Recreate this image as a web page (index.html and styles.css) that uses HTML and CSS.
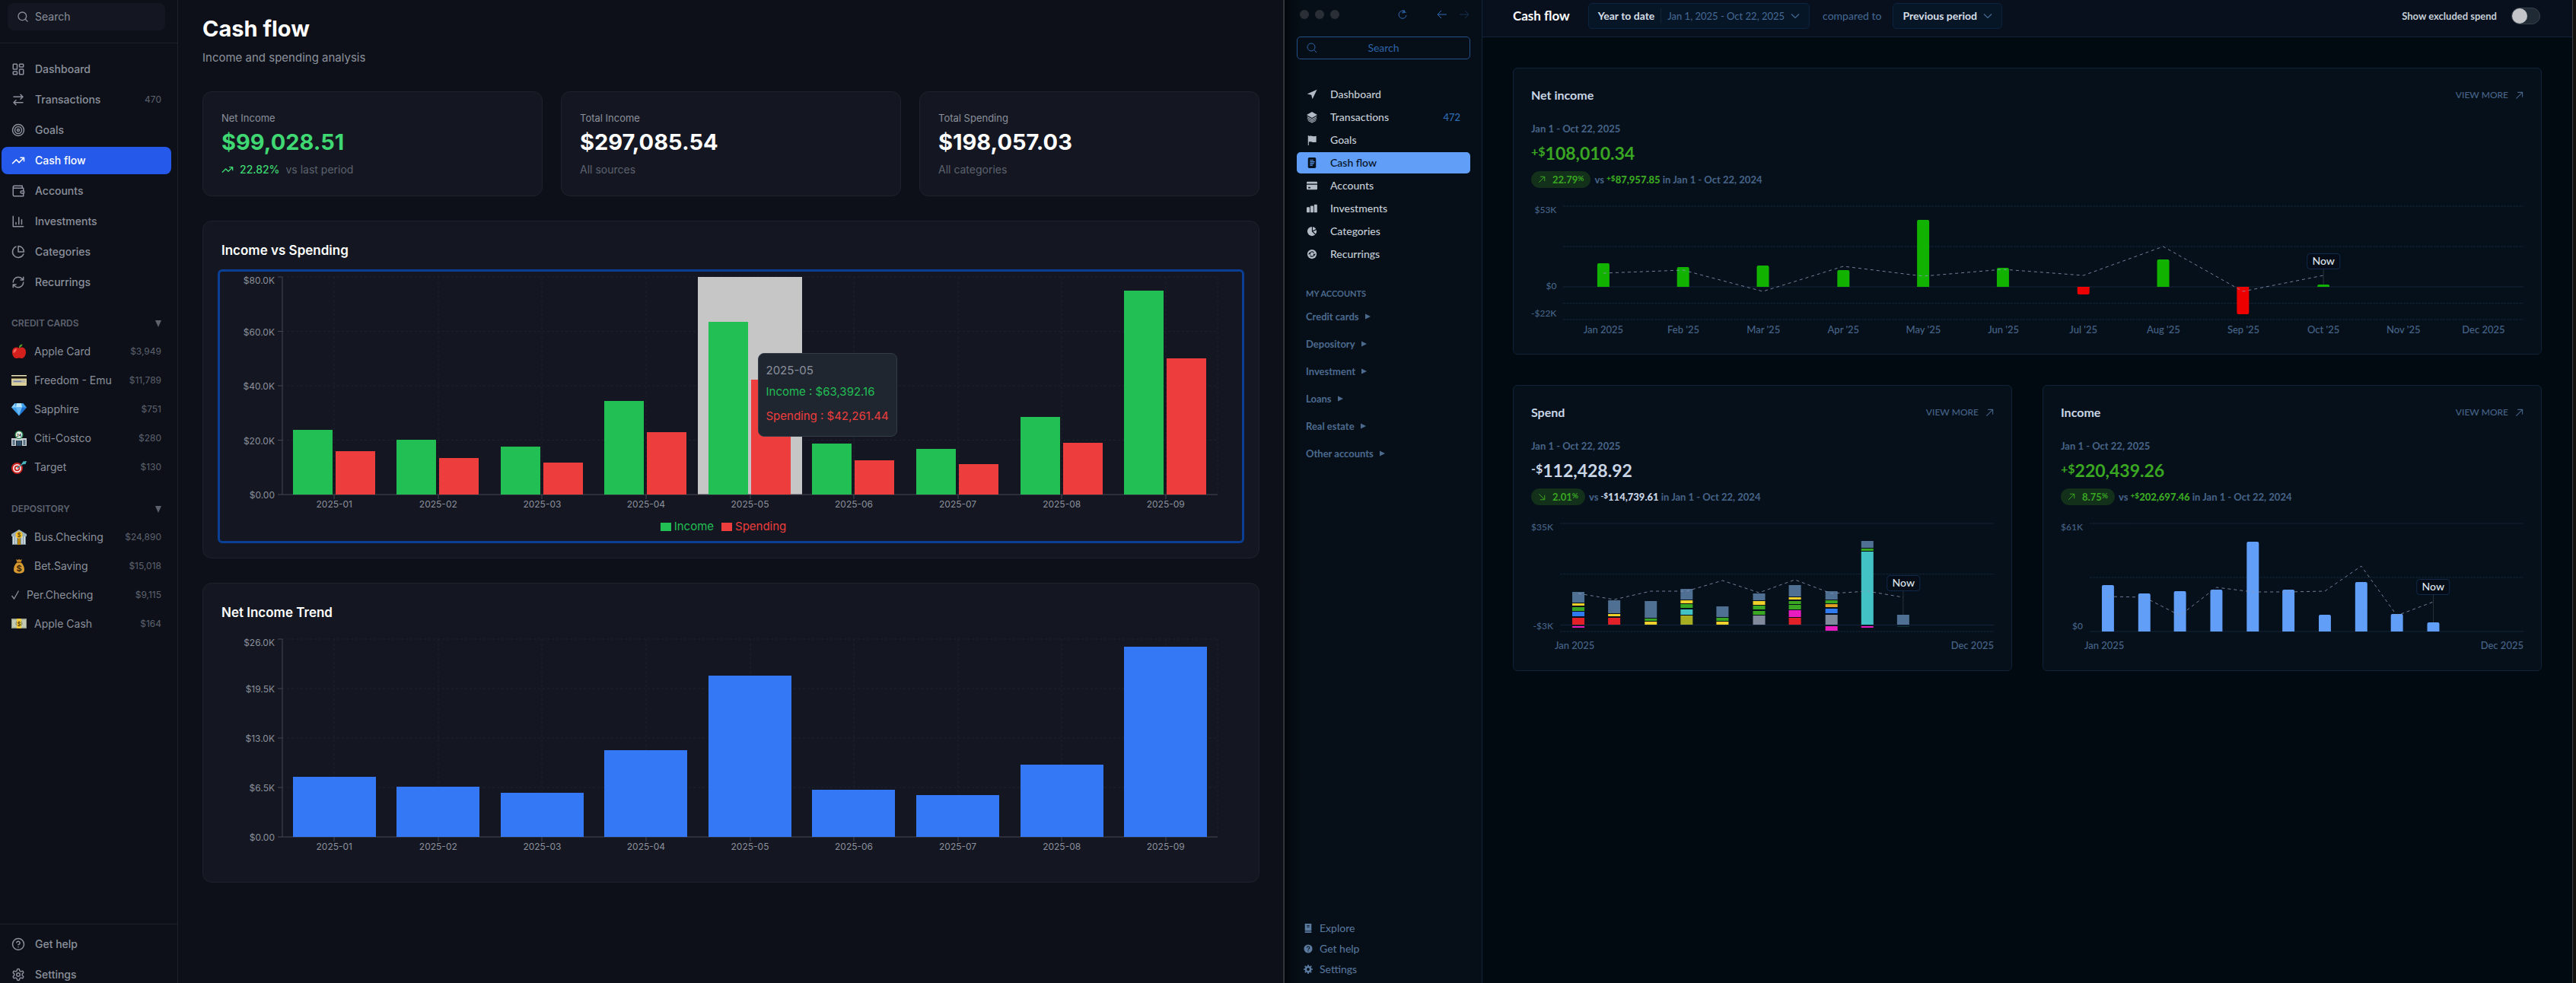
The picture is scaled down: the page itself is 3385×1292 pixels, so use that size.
FILE: index.html
```html
<!DOCTYPE html>
<html lang="en">
<head>
<meta charset="utf-8">
<title>Cash flow</title>
<meta name="viewport" content="width=device-width, initial-scale=1">
<link rel="stylesheet" href="styles.css">
</head>
<body>
<svg class="sprite" aria-hidden="true">
  <symbol id="arrow-ne" viewBox="0 0 12 12"><path d="M1.500 10.500l9-9M3.500 1.500h7v7" fill="none" stroke="currentColor" stroke-width="1.200"/></symbol>
  <symbol id="arrow-se" viewBox="0 0 12 12"><path d="M1.500 1.500l9 9M10.500 3.500v7h-7" fill="none" stroke="currentColor" stroke-width="1.200"/></symbol>
  <symbol id="chevron" viewBox="0 0 12 12"><path d="M1 3.500l5 5 5-5" fill="none" stroke="currentColor" stroke-width="1.200"/></symbol>
  <symbol id="trend" viewBox="0 0 24 24"><path d="M22 7l-8.500 8.500-5-5L2 17M16 7h6v6"/></symbol>
  <symbol id="caret" viewBox="0 0 8 8"><path d="M0 0l8 4-8 4z" fill="currentColor"/></symbol>
</svg>

<div class="desktop">
<section class="app app-left">
  <aside class="sidebar">
    <header class="sidebar-head">
      <label class="search">
        <svg class="line-icon" width="16" height="16" viewBox="0 0 24 24"><circle cx="11" cy="11" r="8"/><path d="M21 21l-4.300-4.300"/></svg>
        <input type="search" placeholder="Search" aria-label="Search">
      </label>
    </header>
    <div class="sidebar-body">
      <nav class="nav">
        <a href="#dashboard"><svg class="line-icon" viewBox="0 0 24 24"><rect x="3" y="3" width="7" height="9" rx="1"/><rect x="14" y="3" width="7" height="5" rx="1"/><rect x="14" y="12" width="7" height="9" rx="1"/><rect x="3" y="16" width="7" height="5" rx="1"/></svg><span>Dashboard</span></a>
        <a href="#transactions"><svg class="line-icon" viewBox="0 0 24 24"><path d="M16 3l4 4-4 4M20 7H4M8 21l-4-4 4-4M4 17h16"/></svg><span>Transactions</span><small>470</small></a>
        <a href="#goals"><svg class="line-icon" viewBox="0 0 24 24"><circle cx="12" cy="12" r="10"/><circle cx="12" cy="12" r="6"/><circle cx="12" cy="12" r="2"/></svg><span>Goals</span></a>
        <a href="#cashflow" class="active" aria-current="page"><svg class="line-icon"><use href="#trend"/></svg><span>Cash flow</span></a>
        <a href="#accounts"><svg class="line-icon" viewBox="0 0 24 24"><path d="M21 12V7H5a2 2 0 0 1 0-4h14v4M3 5v14a2 2 0 0 0 2 2h16v-5M18 12a2 2 0 0 0 0 4h4v-4z"/></svg><span>Accounts</span></a>
        <a href="#investments"><svg class="line-icon" viewBox="0 0 24 24"><path d="M3 3v18h18M8 17v-3M13 17V5M18 17V9"/></svg><span>Investments</span></a>
        <a href="#categories"><svg class="line-icon" viewBox="0 0 24 24"><path d="M21.210 15.890A10 10 0 1 1 8 2.830M22 12A10 10 0 0 0 12 2v10z"/></svg><span>Categories</span></a>
        <a href="#recurrings"><svg class="line-icon" viewBox="0 0 24 24"><path d="M3 12a9 9 0 0 1 9-9 9.750 9.750 0 0 1 6.740 2.740L21 8M21 3v5h-5M21 12a9 9 0 0 1-9 9 9.750 9.750 0 0 1-6.740-2.740L3 16M8 16H3v5"/></svg><span>Recurrings</span></a>
      </nav>
      <section class="group">
        <button type="button" class="group-head"><span>CREDIT CARDS</span><svg width="8" height="9" viewBox="0 0 8 9"><path d="M0 0h8L4 9z" fill="currentColor"/></svg></button>
        <a class="account" href="#apple-card"><svg class="emoji" viewBox="0 0 20 20"><path d="M10 5.500C7 3.600 1 4.500 1 11c0 4.500 3 8 5.500 8 1.500 0 2-.5 3.500-.5s2 .5 3.500.5C16 19 19 15.500 19 11c0-6.500-6-7.400-9-5.500z" fill="#d3201c"/><path d="M5 6.500c-2 1-2.800 3-2.500 5.500C4 12 7 9 7 6.500z" fill="#f4665c"/><path d="M10 5.500C9.500 3 11 .8 14.500.3 14.500 3 12.500 4 10 5.500z" fill="#4f9a2a"/></svg><span>Apple Card</span><small>$3,949</small></a>
        <a class="account" href="#freedom"><svg class="emoji" viewBox="0 0 20 20"><rect y="3" width="20" height="14" rx="1" fill="#dccf95"/><rect y="3" width="20" height="2" fill="#efe7bd"/><rect y="4.500" width="20" height="3" fill="#17130c"/><rect x="1.500" y="9.500" width="17" height="3.500" fill="#b9b7a9"/><path d="M3 11.300h10" stroke="#5b6fa8"/></svg><span>Freedom - Emu</span><small>$11,789</small></a>
        <a class="account" href="#sapphire"><svg class="emoji" viewBox="0 0 20 20"><path d="M4.500 2h11L20 7.500 10 18.500 0 7.500z" fill="#3f9fe8"/><path d="M4.500 2L6 7.500H0z" fill="#8ed0fb"/><path d="M7 2h6l1 5.500H6z" fill="#b9e4ff"/><path d="M6 7.500h8l-4 11z" fill="#67b8f5"/><path d="M14 7.500h6L10 18.500z" fill="#1f72cf"/></svg><span>Sapphire</span><small>$751</small></a>
        <a class="account" href="#citi"><svg class="emoji" viewBox="0 0 20 20"><rect y="10" width="20" height="10" fill="#c9cfd2"/><rect x="1.500" y="12" width="3" height="7" fill="#5b7486"/><rect x="15.500" y="12" width="3" height="7" fill="#5b7486"/><rect x="6" y="13" width="8" height="7" fill="#1d3040"/><path d="M8 13v7M10 13v7M12 13v7" stroke="#4f7da3" stroke-width=".8"/><circle cx="10" cy="5.500" r="5.500" fill="#2f8f55"/><circle cx="10" cy="5.500" r="4.200" fill="#eef3ee"/><text x="10" y="7.600" class="glyph">24</text></svg><span>Citi-Costco</span><small>$280</small></a>
        <a class="account" href="#target"><svg class="emoji" viewBox="0 0 20 20"><circle cx="7.500" cy="11.500" r="7.500" fill="#c9201f"/><circle cx="7.500" cy="11.500" r="5.500" fill="#f3e6e4"/><circle cx="7.500" cy="11.500" r="3.800" fill="#c9201f"/><circle cx="7.500" cy="11.500" r="2" fill="#f3e6e4"/><path d="M7.500 11.500L16 4.500" stroke="#2c8c94" stroke-width="1.500"/><path d="M13 6.500l2.500-4L20 2l-1.500 4z" fill="#49b7bd"/></svg><span>Target</span><small>$130</small></a>
      </section>
      <section class="group">
        <button type="button" class="group-head"><span>DEPOSITORY</span><svg width="8" height="9" viewBox="0 0 8 9"><path d="M0 0h8L4 9z" fill="currentColor"/></svg></button>
        <a class="account" href="#bus"><svg class="emoji" viewBox="0 0 20 20"><path d="M0 6l10-6 10 6v3H0z" fill="#98aeb8"/><path d="M1 9h18v11H1z" fill="#7d939c"/><path d="M3 9v10M6 9v10M14 9v10M17 9v10" stroke="#dfe7ea" stroke-width="1.600"/><path d="M8 12h4v8H8z" fill="#b8860f"/><circle cx="10" cy="7" r="4.600" fill="#f2c230"/><text x="10" y="9.500" class="glyph glyph-coin">$</text></svg><span>Bus.Checking</span><small>$24,890</small></a>
        <a class="account" href="#bet"><svg class="emoji" viewBox="0 0 20 20"><path d="M6 1l2 1 2-1 2 1 2-1-1.500 4h-5z" fill="#c98a2a"/><path d="M7.500 5h5c3 3 4.500 6 4.500 9.500 0 3.500-2 5-7 5s-7-1.500-7-5C3 11 4.500 8 7.500 5z" fill="#d79b33"/><path d="M7 4.500h6v1.400H7z" fill="#7a4a12"/><text x="10" y="16.500" class="glyph glyph-bag">$</text></svg><span>Bet.Saving</span><small>$15,018</small></a>
        <a class="account" href="#per"><svg class="check" width="10" height="12" viewBox="0 0 10 12"><path d="M.5 7L3.500 11 9.500.5" fill="none" stroke="currentColor" stroke-width="1.300"/></svg><span>Per.Checking</span><small>$9,115</small></a>
        <a class="account" href="#cash"><svg class="emoji" viewBox="0 0 20 20"><rect y="3" width="20" height="13" fill="#98a08a"/><rect x="1" y="4.500" width="18" height="10" fill="#c3c9b2"/><circle cx="10" cy="9.500" r="4.500" fill="#8b957c"/><rect x="7" y="3" width="6" height="13" fill="#f0c93d"/><text x="10" y="12.600" class="glyph glyph-coin">$</text></svg><span>Apple Cash</span><small>$164</small></a>
      </section>
    </div>
    <footer class="sidebar-foot nav">
      <a href="#help"><svg class="line-icon" viewBox="0 0 24 24"><circle cx="12" cy="12" r="10"/><path d="M9.090 9a3 3 0 0 1 5.830 1c0 2-3 3-3 3M12 17h.01"/></svg><span>Get help</span></a>
      <a href="#settings"><svg class="line-icon" viewBox="0 0 24 24"><path d="M12.220 2h-.44a2 2 0 0 0-2 2v.18a2 2 0 0 1-1 1.730l-.43.25a2 2 0 0 1-2 0l-.15-.08a2 2 0 0 0-2.730.73l-.22.38a2 2 0 0 0 .73 2.730l.15.1a2 2 0 0 1 1 1.720v.51a2 2 0 0 1-1 1.740l-.15.09a2 2 0 0 0-.73 2.730l.22.38a2 2 0 0 0 2.730.73l.15-.08a2 2 0 0 1 2 0l.43.25a2 2 0 0 1 1 1.730V20a2 2 0 0 0 2 2h.44a2 2 0 0 0 2-2v-.18a2 2 0 0 1 1-1.730l.43-.25a2 2 0 0 1 2 0l.15.08a2 2 0 0 0 2.730-.73l.22-.39a2 2 0 0 0-.73-2.730l-.15-.08a2 2 0 0 1-1-1.740v-.5a2 2 0 0 1 1-1.740l.15-.09a2 2 0 0 0 .73-2.730l-.22-.38a2 2 0 0 0-2.730-.73l-.15.08a2 2 0 0 1-2 0l-.43-.25a2 2 0 0 1-1-1.730V4a2 2 0 0 0-2-2z"/><circle cx="12" cy="12" r="3"/></svg><span>Settings</span></a>
    </footer>
  </aside>

  <main class="main">
    <h1>Cash flow</h1>
    <p class="subtitle">Income and spending analysis</p>
    <div class="stats">
      <article class="card"><h3>Net Income</h3><p class="stat positive">$99,028.51</p><p class="note"><svg class="line-icon" width="16" height="16"><use href="#trend"/></svg><b>22.82%</b><span>vs last period</span></p></article>
      <article class="card"><h3>Total Income</h3><p class="stat">$297,085.54</p><p class="note"><span>All sources</span></p></article>
      <article class="card"><h3>Total Spending</h3><p class="stat">$198,057.03</p><p class="note"><span>All categories</span></p></article>
    </div>

    <article class="card chart-card">
      <h2>Income vs Spending</h2>
      <div class="chart focused">
        <div class="y-axis"><span>$80.0K</span><span>$60.0K</span><span>$40.0K</span><span>$20.0K</span><span>$0.00</span></div>
        <div class="plot plot-tall">
          <svg viewBox="0 0 1229 286" preserveAspectRatio="none" role="img" aria-label="Income and spending by month">
            <path class="grid" d="M0 0H1229M0 71.500H1229M0 143H1229M0 214.500H1229M68 0V286M205 0V286M341 0V286M478 0V286M615 0V286M751 0V286M888 0V286M1024 0V286M1161 0V286M1229 0V286"/>
            <path fill="#c6c6c6" d="M546 0h137v286H546z"/>
            <path class="axis" d="M0 0V286H1229M-6 0H0M-6 71.500H0M-6 143H0M-6 214.500H0M-6 286H0M68 286v6M205 286v6M341 286v6M478 286v6M615 286v6M751 286v6M888 286v6M1024 286v6M1161 286v6"/>
            <path fill="#22bf55" d="M14 286V201h52V286zM150 286V214h52V286zM287 286V223h52V286zM423 286V163h52V286zM560 286V59h52V286zM696 286V219h52V286zM833 286V226h52V286zM970 286V184h52V286zM1106 286V18h52V286z"/>
            <path fill="#ed3d3d" d="M70 286V229h52V286zM206 286V238h52V286zM343 286V244h52V286zM479 286V204h52V286zM616 286V135h52V286zM752 286V241h52V286zM889 286V246h52V286zM1026 286V218h52V286zM1162 286V107h52V286z"/>
          </svg>
          <div class="tooltip"><p>2025-05</p><p class="income">Income : $63,392.16</p><p class="spending">Spending : $42,261.44</p></div>
        </div>
        <div class="x-axis"><span>2025-01</span><span>2025-02</span><span>2025-03</span><span>2025-04</span><span>2025-05</span><span>2025-06</span><span>2025-07</span><span>2025-08</span><span>2025-09</span></div>
        <div class="legend"><span class="income">Income</span><span class="spending">Spending</span></div>
      </div>
    </article>

    <article class="card chart-card">
      <h2>Net Income Trend</h2>
      <div class="chart">
        <div class="y-axis"><span>$26.0K</span><span>$19.5K</span><span>$13.0K</span><span>$6.5K</span><span>$0.00</span></div>
        <div class="plot plot-short">
          <svg viewBox="0 0 1229 260" preserveAspectRatio="none" role="img" aria-label="Net income by month">
            <path class="grid" d="M0 0H1229M0 65H1229M0 130H1229M0 195H1229M68 0V260M205 0V260M341 0V260M478 0V260M615 0V260M751 0V260M888 0V260M1024 0V260M1161 0V260M1229 0V260"/>
            <path class="axis" d="M0 0V260H1229M-6 0H0M-6 65H0M-6 130H0M-6 195H0M-6 260H0M68 260v6M205 260v6M341 260v6M478 260v6M615 260v6M751 260v6M888 260v6M1024 260v6M1161 260v6"/>
            <path fill="#3478f5" d="M14 260V181h109V260zM150 260V194h109V260zM287 260V202h109V260zM423 260V146h109V260zM560 260V48h109V260zM696 260V198h109V260zM833 260V205h109V260zM970 260V165h109V260zM1106 260V10h109V260z"/>
          </svg>
        </div>
        <div class="x-axis"><span>2025-01</span><span>2025-02</span><span>2025-03</span><span>2025-04</span><span>2025-05</span><span>2025-06</span><span>2025-07</span><span>2025-08</span><span>2025-09</span></div>
      </div>
    </article>
  </main>
</section>

<section class="app app-right">
  <aside class="side">
    <div class="titlebar">
      <span class="dots"><i></i><i></i><i></i></span>
      <button type="button" class="reload" aria-label="Reload"><svg width="14" height="14" viewBox="0 0 14 14"><path d="M11.500 5A5 5 0 1 0 12 8M9 1l.5 3.500-3.500.5M7 1.500l2.500 3"/></svg></button>
      <button type="button" aria-label="Back"><svg width="14" height="14" viewBox="0 0 14 14"><path d="M13 7H1M6 2L1 7l5 5"/></svg></button>
      <button type="button" class="dim" aria-label="Forward"><svg width="14" height="14" viewBox="0 0 14 14"><path d="M1 7h12M8 2l5 5-5 5"/></svg></button>
    </div>
    <label class="find"><svg width="14" height="14" viewBox="0 0 14 14"><circle cx="6" cy="6" r="5"/><path d="M9.500 9.500L13 13"/></svg><input type="search" placeholder="Search" aria-label="Search"></label>
    <nav class="menu">
      <a href="#dashboard"><svg viewBox="0 0 16 16"><path d="M15.500.8L.8 7.300l6.300 1.600 1.600 6.300z"/></svg><span>Dashboard</span></a>
      <a href="#transactions"><svg viewBox="0 0 16 16"><path d="M8 0l8 4.500L8 9 0 4.500z"/><path d="M1 7.500l7 4 7-4M1 10l7 4 7-4M2 13l6 3 6-3" fill="none" stroke="currentColor" stroke-width="1.200"/></svg><span>Transactions</span><small>472</small></a>
      <a href="#goals"><svg viewBox="0 0 16 16"><path d="M2 1h1.200v15H2zM3 2.500C6 .5 8 3.500 14.500 2v9C9 12.500 7 9.500 3 11z"/></svg><span>Goals</span></a>
      <a href="#cashflow" class="active" aria-current="page"><svg viewBox="0 0 16 16"><rect x="2" width="12" height="16" rx="2"/><path d="M5 4h5M5 6.500h7M5 9h6M5 11.500h4" stroke="#609ef8" stroke-width="1.300"/></svg><span>Cash flow</span></a>
      <a href="#accounts"><svg viewBox="0 0 16 16"><path d="M1.500 2h13Q16 2 16 3.500V5H0V3.500Q0 2 1.500 2zM0 6.500h16v6q0 1.500-1.500 1.500h-13Q0 14 0 12.500zM2.500 10v2h3v-2z" fill-rule="evenodd"/></svg><span>Accounts</span></a>
      <a href="#investments"><svg viewBox="0 0 16 16"><rect y="6" width="4.600" height="8" rx="1"/><rect x="5.600" y="4" width="4.600" height="10" rx="1"/><rect x="11.200" y="2" width="4.600" height="12" rx="1"/></svg><span>Investments</span></a>
      <a href="#categories"><svg viewBox="0 0 16 16"><circle cx="8" cy="8" r="7"/><path d="M8.500 0v8l5.500 5.500M8.500 8L15 5" fill="none" stroke="#060f18" stroke-width="1.300"/></svg><span>Categories</span></a>
      <a href="#recurrings"><svg viewBox="0 0 16 16"><circle cx="8" cy="8" r="7"/><path d="M4.500 7.500A3.600 3.600 0 0 1 11 6M11.500 8.500A3.600 3.600 0 0 1 5 10M3 8.500l1.500-2 1.500 2M10 7.500l1.500 2 1.500-2" fill="none" stroke="#060f18" stroke-width="1.200"/></svg><span>Recurrings</span></a>
    </nav>
    <h4>MY ACCOUNTS</h4>
    <div class="accounts">
      <button type="button">Credit cards<svg><use href="#caret"/></svg></button>
      <button type="button">Depository<svg><use href="#caret"/></svg></button>
      <button type="button">Investment<svg><use href="#caret"/></svg></button>
      <button type="button">Loans<svg><use href="#caret"/></svg></button>
      <button type="button">Real estate<svg><use href="#caret"/></svg></button>
      <button type="button">Other accounts<svg><use href="#caret"/></svg></button>
    </div>
    <footer class="links">
      <a href="#explore"><svg viewBox="0 0 14 14"><path d="M2 0h10v11H2zM2 12h10v2H2z"/><path d="M5 3h4M5 5h4" stroke="#060f18"/></svg>Explore</a>
      <a href="#help"><svg viewBox="0 0 14 14"><circle cx="7" cy="7" r="6.500"/><path d="M5 5.500a2 2 0 1 1 2.700 1.800Q7 7.600 7 8.500M7 9.700v1.300" fill="none" stroke="#060f18" stroke-width="1.200"/></svg>Get help</a>
      <a href="#settings"><svg viewBox="0 0 14 14"><circle cx="7" cy="7" r="3.700" fill="none" stroke="currentColor" stroke-width="3"/><path d="M7 0v14M0 7h14M2 2l10 10M12 2L2 12" stroke="currentColor" stroke-width="2" stroke-dasharray="2.300 9.400 2.300"/></svg>Settings</a>
    </footer>
  </aside>

  <main class="content">
    <header class="topbar">
      <h1>Cash flow</h1>
      <button type="button" class="picker"><b>Year to date</b><span class="range">Jan 1, 2025 - Oct 22, 2025</span><svg><use href="#chevron"/></svg></button>
      <span class="compare">compared to</span>
      <button type="button" class="picker"><b>Previous period</b><svg><use href="#chevron"/></svg></button>
      <label class="switch">Show excluded spend<input type="checkbox"></label>
    </header>

    <div class="panels">
      <article class="panel wide">
        <header><h2>Net income</h2><a href="#net">VIEW MORE<svg><use href="#arrow-ne"/></svg></a></header>
        <p class="period">Jan 1 - Oct 22, 2025</p>
        <p class="amount gain"><sup>+$</sup>108,010.34</p>
        <p class="versus"><span class="pill"><svg><use href="#arrow-ne"/></svg>22.79<sup>%</sup></span>vs <b class="gain"><sup>+$</sup>87,957.85</b> in Jan 1 - Oct 22, 2024</p>
        <div class="figure">
          <div class="scale scale-net"><span>$53K</span><span>$0</span><span>-$22K</span></div>
          <div class="canvas canvas-net">
            <svg viewBox="0 0 1264 149" preserveAspectRatio="none" role="img" aria-label="Net income by month">
              <path class="rule" d="M0 0H1264M0 53H1264M0 127.500H1264M0 149H1264"/>
              <path class="zero" d="M0 106H1264"/>
              <path class="stem" d="M1001 82V103"/>
              <path fill="#12b300" d="M45 106V77q0-2 2-2h12q2 0 2 2v29zM150 106V82q0-2 2-2h12q2 0 2 2v24zM255 106V80q0-2 2-2h12q2 0 2 2v26zM361 106V86q0-2 2-2h12q2 0 2 2v20zM466 106V20q0-2 2-2h12q2 0 2 2v86zM571 106V83q0-2 2-2h12q2 0 2 2v23zM782 106V72q0-2 2-2h12q2 0 2 2v34zM993 106v-1q0-2 2-2h12q2 0 2 2v1z"/>
              <path fill="#ec0000" d="M677 106v8q0 2 2 2h12q2 0 2-2v-8zM887 106v34q0 2 2 2h12q2 0 2-2v-34z"/>
              <path class="previous" d="M53 88L158 84 263 112 369 79 474 92 579 83 685 91 790 53 895 112 1001 91"/>
            </svg>
            <span class="now now-net">Now</span>
          </div>
          <div class="months"><span>Jan 2025</span><span>Feb '25</span><span>Mar '25</span><span>Apr '25</span><span>May '25</span><span>Jun '25</span><span>Jul '25</span><span>Aug '25</span><span>Sep '25</span><span>Oct '25</span><span>Nov '25</span><span>Dec 2025</span></div>
        </div>
      </article>

      <article class="panel">
        <header><h2>Spend</h2><a href="#spend">VIEW MORE<svg><use href="#arrow-ne"/></svg></a></header>
        <p class="period">Jan 1 - Oct 22, 2025</p>
        <p class="amount"><sup>-$</sup>112,428.92</p>
        <p class="versus"><span class="pill"><svg><use href="#arrow-se"/></svg>2.01<sup>%</sup></span>vs <b><sup>-$</sup>114,739.61</b> in Jan 1 - Oct 22, 2024</p>
        <div class="figure">
          <div class="scale"><span>$35K</span><span>-$3K</span></div>
          <div class="canvas">
            <svg viewBox="0 0 569 142" preserveAspectRatio="none" role="img" aria-label="Spend by month and category">
              <path class="rule" d="M0 0H569M0 66.500H569M0 142H569"/>
              <path class="zero" d="M0 133.500H569"/>
              <path class="stem" d="M450 89V120"/>
              <path fill="#4f7092" d="M16 90h16v14H16zM63 101h16v17H63zM111 102h16v22h-16zM158 86h16v14h-16zM205 109h16v14h-16zM253 92h16v9h-16zM300 81h16v15h-16zM348 89h16v11h-16zM395 23h16v9h-16zM442 120h16v13h-16z"/>
              <path fill="#f0d02a" d="M16 105h16v3H16zM63 119h16v3H63zM111 129h16v4h-16zM158 101h16v4h-16zM205 129h16v4h-16zM253 102h16v5h-16zM300 97h16v3h-16z"/>
              <path fill="#3aa722" d="M16 110h16v5H16zM111 125h16v3h-16zM158 106h16v5h-16zM205 124h16v4h-16zM253 108h16v5h-16zM253 115h16v5h-16zM300 102h16v4h-16zM300 107h16v6h-16zM348 101h16v4h-16zM395 33h16v3h-16z"/>
              <path fill="#e22027" d="M16 124h16v9H16zM63 124h16v9H63zM300 124h16v9h-16z"/>
              <path fill="#2f7af0" d="M16 116h16v6H16zM348 112h16v6h-16z"/>
              <path fill="#42c2c4" d="M158 113h16v7h-16zM395 37h16v96h-16z"/>
              <path fill="#a8ae22" d="M158 121h16v12h-16z"/>
              <path fill="#818a9c" d="M253 121h16v12h-16zM348 120h16v13h-16z"/>
              <path fill="#dfa023" d="M348 106h16v4h-16z"/>
              <path fill="#e81cc0" d="M300 114h16v9h-16zM16 135h16v2H16zM348 135h16v6h-16zM395 135h16v2h-16z"/>
              <path fill="#12353c" d="M442 135h16v1h-16z"/>
              <path class="previous" d="M24 92L71 100 119 89 166 89 213 75 261 91 308 74 356 92 403 89 450 97"/>
            </svg>
            <span class="now now-spend">Now</span>
          </div>
          <div class="ends"><span>Jan 2025</span><span>Dec 2025</span></div>
        </div>
      </article>

      <article class="panel">
        <header><h2>Income</h2><a href="#income">VIEW MORE<svg><use href="#arrow-ne"/></svg></a></header>
        <p class="period">Jan 1 - Oct 22, 2025</p>
        <p class="amount gain"><sup>+$</sup>220,439.26</p>
        <p class="versus"><span class="pill"><svg><use href="#arrow-ne"/></svg>8.75<sup>%</sup></span>vs <b class="gain"><sup>+$</sup>202,697.46</b> in Jan 1 - Oct 22, 2024</p>
        <div class="figure">
          <div class="scale"><span>$61K</span><span>$0</span></div>
          <div class="canvas">
            <svg viewBox="0 0 572 142" preserveAspectRatio="none" role="img" aria-label="Income by month">
              <path class="rule" d="M0 0H572M0 71H572"/>
              <path class="zero" d="M0 142H572"/>
              <path class="stem" d="M453 94V130"/>
              <path fill="#609ef8" d="M16 142V83q0-2 2-2h12q2 0 2 2v59zM64 142V94q0-2 2-2h12q2 0 2 2v48zM111 142V91q0-2 2-2h12q2 0 2 2v51zM159 142V89q0-2 2-2h12q2 0 2 2v53zM207 142V26q0-2 2-2h12q2 0 2 2v116zM254 142V89q0-2 2-2h12q2 0 2 2v53zM302 142V122q0-2 2-2h12q2 0 2 2v20zM350 142V79q0-2 2-2h12q2 0 2 2v63zM397 142V121q0-2 2-2h12q2 0 2 2v21zM445 142V132q0-2 2-2h12q2 0 2 2v10z"/>
              <path class="previous" d="M24 96L72 97 119 121 167 84 215 90 262 90 310 89 358 56 405 121 453 103"/>
            </svg>
            <span class="now now-income">Now</span>
          </div>
          <div class="ends"><span>Jan 2025</span><span>Dec 2025</span></div>
        </div>
      </article>
    </div>
  </main>
</section>
</div>
</body>
</html>
```
FILE: styles.css
```css
* { box-sizing: border-box; }
body { margin: 0; background: #14120f; overflow: hidden; }
h1, h2, h3, h4, p { margin: 0; font-weight: inherit; }
a { color: inherit; text-decoration: none; }
button, input { font: inherit; color: inherit; background: none; border: 0; padding: 0; margin: 0; }
button { cursor: pointer; }
svg { flex: none; overflow: visible; }
.sprite { display: block; width: 0; height: 0; overflow: hidden; }
.desktop { display: grid; grid-template-columns: 1687fr 1694fr; height: 100vh; padding-right: 4px; overflow: hidden; }
.app { display: flex; height: 100vh; overflow: hidden; }

/* Left window */
.app-left { font: 14px/20px Inter, "Liberation Sans", sans-serif; color: #8b909c; background: #0d1018; border-right: 1px solid #2b2e35; }
.line-icon { width: 18px; height: 18px; fill: none; stroke: currentColor; stroke-width: 2; stroke-linecap: round; stroke-linejoin: round; }
.sidebar { display: flex; flex-direction: column; flex: none; width: 234px; height: calc(100vh + 8px); border-right: 1px solid #1d212c; }
.sidebar-head { padding: 4px 16px 16px 10px; border-bottom: 1px solid #1d212c; }
.search { display: flex; align-items: center; gap: 8px; height: 36px; padding: 0 12px; border-radius: 8px; background: #141721; }
.search .line-icon { width: 16px; height: 16px; }
.search input { width: 100%; outline: 0; }
.search input::placeholder { color: #8b909c; opacity: 1; }
.sidebar-body { flex: 1; padding: 16px 8px 0 2px; }
.nav { display: flex; flex-direction: column; gap: 4px; font-weight: 500; }
.nav a { display: flex; align-items: center; gap: 13px; height: 36px; padding: 0 13px; border-radius: 8px; }
.nav a.active { color: #fff; background: #2459e9; }
small { margin-left: auto; font-size: 12px; font-weight: 400; color: #5d626f; }
.group { margin-top: 24px; }
.group-head { display: flex; align-items: center; justify-content: space-between; width: 100%; height: 24px; margin-bottom: 6px; padding: 0 13px; font-size: 12px; font-weight: 600; color: #5d626f; }
.account { display: flex; align-items: center; gap: 10px; height: 38px; padding: 0 13px; }
.emoji { width: 20px; height: 20px; }
.glyph { font: 700 5px Inter, sans-serif; text-anchor: middle; fill: #20302a; }
.glyph-coin { font-size: 7px; fill: #5d4405; }
.glyph-bag { font-size: 11px; fill: #3b2506; }
.sidebar-foot { padding: 8px 8px 1px 2px; border-top: 1px solid #1d212c; }

.main { flex: 1; min-width: 0; padding: 20px 31px 0 32px; }
.main h1 { font-size: 29px; line-height: 36px; font-weight: 700; color: #fff; }
.subtitle { margin: 8px 0 32px; font-size: 15px; line-height: 24px; }
.stats { display: grid; grid-template-columns: repeat(3, 1fr); gap: 24px; }
.card { padding: 24px; border: 1px solid #1d222d; border-radius: 12px; background: #141721; }
.card h3 { font-size: 13px; }
.stat { margin: 4px 0 8px; font-size: 29px; line-height: 36px; font-weight: 700; color: #fff; }
.positive, .note b { color: #3fd873; }
.note { display: flex; align-items: center; gap: 8px; color: #5d626f; }
.note b { font-weight: 500; }
.note .line-icon { width: 16px; height: 16px; color: #3fd873; }
.chart-card { margin-top: 32px; }
.chart-card h2 { margin-bottom: 16px; font-size: 17px; line-height: 28px; font-weight: 600; color: #fff; }
.chart { display: grid; grid-template-columns: 70px 1fr; column-gap: 10px; padding: 5px 30px 5px 0; font-size: 12px; line-height: 16px; }
.focused { outline: 3px solid #0b3f96; outline-offset: 2px; border-radius: 1px; }
.y-axis { display: flex; flex-direction: column; justify-content: space-between; text-align: right; }
.y-axis span { height: 0; line-height: 2px; }
.y-axis span:first-child { line-height: 10px; }
.plot { position: relative; }
.plot svg { display: block; width: 100%; height: 100%; }
.plot-tall { height: 286px; }
.plot-short { height: 260px; }
.grid { fill: none; stroke: #1d232e; stroke-width: 1; stroke-dasharray: 3 3; vector-effect: non-scaling-stroke; }
.axis { fill: none; stroke: #454955; stroke-width: 1; vector-effect: non-scaling-stroke; }
.x-axis { grid-column: 2; display: grid; grid-template-columns: repeat(9, 1fr); height: 30px; padding-top: 5px; text-align: center; }
.legend { grid-column: 1 / 3; display: flex; justify-content: center; gap: 10px; height: 24px; padding-left: 10px; font-size: 15px; line-height: 24px; }
.legend span { display: flex; align-items: center; gap: 4px; }
.legend span::before { content: ""; width: 14px; height: 11px; background: currentColor; }
.income { color: #22bf55; }
.spending { color: #ed3d3d; }
.tooltip { position: absolute; left: calc(50% + 10px); top: 100px; padding: 10px; border: 1px solid #333d4a; border-radius: 8px; background: #1f2630; font-size: 15px; line-height: 24px; white-space: nowrap; }
.tooltip .income, .tooltip .spending { padding: 4px 0; }

/* Right window */
.app-right { font: 14px/20px Lato, "Liberation Sans", sans-serif; color: #c5cdd6; background: #010a10; border: 1px solid #393c41; border-width: 0 1px; }
.side { display: flex; flex-direction: column; flex: none; width: 260px; padding: 0 15px 5px 16px; border-right: 1px solid #14253a; background: linear-gradient(90deg, #03070c, #060f18 24px); }
.titlebar { display: flex; align-items: center; height: 38px; padding: 0 1px 0 4px; color: #2f6bb4; }
.titlebar svg { display: block; fill: none; stroke: currentColor; }
.dots { display: flex; gap: 8px; margin-right: auto; }
.dots i { width: 12px; height: 12px; border-radius: 50%; background: #2a2f35; }
.reload { margin-right: 38px; }
.dim { margin-left: 15px; color: #17304f; }
.find { display: flex; align-items: center; height: 30px; margin-top: 10px; padding: 0 12px; border: 1px solid #245089; border-radius: 5px; color: #2e63a6; }
.find svg { fill: none; stroke: currentColor; }
.find input { flex: 1; min-width: 0; padding-right: 14px; outline: 0; text-align: center; appearance: none; }
.find input::-webkit-search-cancel-button { display: none; }
.find input::placeholder { color: #2e63a6; opacity: 1; }
.menu { display: flex; flex-direction: column; gap: 2px; margin-top: 32px; font-weight: 500; }
.menu a { display: flex; align-items: center; gap: 16px; height: 28px; padding: 0 13px 0 12px; border-radius: 5px; }
.menu svg { width: 16px; height: 14px; fill: #b3bcc6; color: #b3bcc6; }
.menu a.active { color: #04101c; background: #609ef8; }
.menu a.active svg { fill: #04101c; }
.menu small { font-size: 13px; font-weight: 500; color: #2f6bb4; }
.side h4 { margin-top: 30px; padding-left: 12px; font-size: 11px; line-height: 16px; font-weight: 700; color: #4c6a8e; }
.accounts { display: flex; flex-direction: column; align-items: flex-start; margin-top: 4px; padding-left: 12px; font-size: 13px; font-weight: 700; color: #4c6a8e; }
.accounts button { display: flex; align-items: center; gap: 8px; height: 36px; }
.accounts svg { width: 7px; height: 8px; }
.links { display: flex; flex-direction: column; margin-top: auto; padding-left: 9px; color: #5b7aa0; }
.links a { display: flex; align-items: center; gap: 9px; height: 27px; }
.links svg { width: 12px; height: 12px; fill: currentColor; }

.content { flex: 1; min-width: 0; }
.topbar { display: flex; align-items: center; height: 49px; padding: 0 42px 7px 40px; border-bottom: 1px solid #10233b; background: #07101c; }
.topbar h1 { margin-right: 24px; font-size: 17px; font-weight: 700; color: #fff; }
.picker { display: flex; align-items: center; gap: 8px; height: 34px; padding: 0 12px; border: 1px solid #0c2340; border-radius: 5px; background: #071626; color: #466a96; }
.picker b { color: #d5dee8; }
.picker svg { width: 12px; height: 12px; }
.range { padding-left: 8px; border-left: 1px solid #14253a; font-size: 13px; }
.compare { margin: 0 15px 0 17px; color: #466a96; }
.switch { display: flex; align-items: center; gap: 19px; margin-left: auto; font-size: 13px; font-weight: 700; }
.switch input { appearance: none; width: 38px; height: 22px; padding: 0; border: 1px solid #38424c; border-radius: 11px; background: #202a34; }
.switch input::before { content: ""; display: block; width: 20px; height: 20px; border-radius: 50%; background: #c3c5c8; }
.panels { display: grid; grid-template-columns: 1fr 1fr; gap: 40px; padding: 40px; }
.panel { padding: 23px 23px 22px; border: 1px solid #10233b; border-radius: 6px; background: #06101a; color: #466488; font-size: 13px; font-weight: 500; }
.wide { grid-column: 1 / 3; padding-bottom: 21px; }
.panel header { display: flex; align-items: center; justify-content: space-between; height: 24px; }
.panel h2 { font-size: 16px; font-weight: 700; color: #c9d6e6; }
.panel header a { display: flex; align-items: center; gap: 9px; font-size: 12px; }
.panel header svg { width: 11px; height: 11px; }
.period { margin-top: 22px; font-weight: 700; }
.amount { margin-top: 8px; font-size: 23px; line-height: 28px; font-weight: 700; color: #c9d6e6; }
sup { font-size: 10px; line-height: 0; vertical-align: 3px; }
.amount sup { font-size: 16px; vertical-align: 5px; }
.versus { display: flex; align-items: center; height: 22px; margin-top: 10px; font-weight: 700; white-space: pre; }
.versus b { color: #c9d6e6; }
.pill { display: flex; align-items: center; height: 22px; margin-right: 5px; padding: 0 9px; border-radius: 11px; background: #12301a; color: #3aa722; }
.pill svg { width: 10px; height: 10px; margin-right: 9px; }
.pill sup { align-self: flex-start; line-height: 18px; }
.amount.gain, .versus .gain { color: #3aa722; }
.figure { display: grid; grid-template-columns: auto 1fr; column-gap: 9px; margin-top: 24px; }
.scale { display: flex; flex-direction: column; justify-content: space-between; padding-bottom: 2px; font-size: 12px; line-height: 10px; text-align: right; }
.scale-net { display: grid; grid-template-rows: 100px 36px 12px; padding: 0; }
.canvas { position: relative; height: 142px; }
.canvas-net { height: 149px; }
.canvas svg { display: block; width: 100%; height: 100%; }
.rule, .zero, .stem, .previous { fill: none; stroke: #12243a; stroke-width: 1; vector-effect: non-scaling-stroke; }
.rule { stroke-dasharray: 3 1; }
.stem { stroke: #2a3037; }
.previous { stroke: #8b98b8; stroke-dasharray: 4 4; stroke-opacity: .8; }
.now { position: absolute; left: 79.17%; transform: translateX(-50%); padding: 0 6px 2px; border: 1px solid #12294a; border-radius: 4px; background: #040d17; color: #dfe4ea; font-size: 14px; line-height: 17px; }
.now-net { top: 62px; }
.now-spend { top: 68px; }
.now-income { top: 73px; }
.months { grid-column: 2; display: grid; grid-template-columns: repeat(12, 1fr); margin-top: 3px; text-align: center; padding-bottom: 1px; }
.ends { grid-column: 2; display: flex; justify-content: space-between; margin: 8px 0 1px -7px; }
```
